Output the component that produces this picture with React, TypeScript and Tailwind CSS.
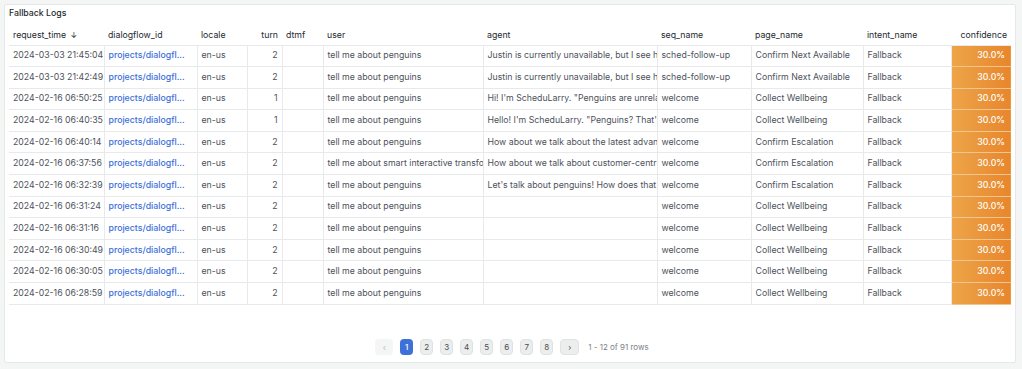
import React from 'react';

type Row = {
  time: string;
  turn: number;
  user: string;
  agent: string;
  seq: string;
  page: string;
};

const rows: Row[] = [
  { time: '2024-03-03 21:45:04', turn: 2, user: 'tell me about penguins', agent: 'Justin is currently unavailable, but I see he has availability soon', seq: 'sched-follow-up', page: 'Confirm Next Available' },
  { time: '2024-03-03 21:42:49', turn: 2, user: 'tell me about penguins', agent: 'Justin is currently unavailable, but I see he has availability soon', seq: 'sched-follow-up', page: 'Confirm Next Available' },
  { time: '2024-02-16 06:50:25', turn: 1, user: 'tell me about penguins', agent: 'Hi! I\'m ScheduLarry. "Penguins are unrelated to scheduling"', seq: 'welcome', page: 'Collect Wellbeing' },
  { time: '2024-02-16 06:40:35', turn: 1, user: 'tell me about penguins', agent: 'Hello! I\'m ScheduLarry. "Penguins? That\'s not something I do"', seq: 'welcome', page: 'Collect Wellbeing' },
  { time: '2024-02-16 06:40:14', turn: 2, user: 'tell me about penguins', agent: 'How about we talk about the latest advancements in scheduling', seq: 'welcome', page: 'Confirm Escalation' },
  { time: '2024-02-16 06:37:56', turn: 2, user: 'tell me about smart interactive transformation', agent: 'How about we talk about customer-centric scheduling', seq: 'welcome', page: 'Confirm Escalation' },
  { time: '2024-02-16 06:32:39', turn: 2, user: 'tell me about penguins', agent: 'Let\'s talk about penguins! How does that sound?', seq: 'welcome', page: 'Confirm Escalation' },
  { time: '2024-02-16 06:31:24', turn: 2, user: 'tell me about penguins', agent: '', seq: 'welcome', page: 'Collect Wellbeing' },
  { time: '2024-02-16 06:31:16', turn: 2, user: 'tell me about penguins', agent: '', seq: 'welcome', page: 'Collect Wellbeing' },
  { time: '2024-02-16 06:30:49', turn: 2, user: 'tell me about penguins', agent: '', seq: 'welcome', page: 'Collect Wellbeing' },
  { time: '2024-02-16 06:30:05', turn: 2, user: 'tell me about penguins', agent: '', seq: 'welcome', page: 'Collect Wellbeing' },
  { time: '2024-02-16 06:28:59', turn: 2, user: 'tell me about penguins', agent: '', seq: 'welcome', page: 'Collect Wellbeing' },
];

const cell = 'h-[21.6px] px-1 whitespace-nowrap overflow-hidden border-b border-r border-[#e8e9eb]';
const head = 'h-[19px] px-1 whitespace-nowrap text-left font-normal text-[#24292e] border-b border-[#e8e9eb]';

const Pager: React.FC = () => {
  const pages = [1, 2, 3, 4, 5, 6, 7, 8];
  return (
    <div className="flex items-center justify-center gap-[7px] pl-[4px] h-[16px] text-[8px]">
      <span className="w-[18px] h-[16px] rounded-sm bg-[#f4f5f5] flex items-center justify-center text-[#b5b8bd]">‹</span>
      {pages.map((p) => (
        <span
          key={p}
          className={
            p === 1
              ? 'w-[13px] h-[16px] rounded-sm bg-[#3d71d9] text-white flex items-center justify-center font-medium'
              : 'w-[13px] h-[16px] rounded-sm bg-[#eceded] border border-[#e0e1e3] text-[#4a4f56] flex items-center justify-center'
          }
        >
          {p}
        </span>
      ))}
      <span className="w-[19px] h-[16px] rounded-sm bg-[#eceded] border border-[#e0e1e3] flex items-center justify-center text-[#4a4f56]">›</span>
      <span className="ml-[2px] text-[#7a7f87]">1 - 12 of 91 rows</span>
    </div>
  );
};

export default function App() {
  return (
    <div className="w-[1022px] h-[369px] bg-[#f4f5f5] p-1 text-[8.75px] text-[#4d525a]" style={{ fontFamily: 'Inter, "Noto Sans", sans-serif' }}>
      <div className="h-[359px] w-[1012px] bg-white border border-[#e6e7e8] rounded-[2px] flex flex-col">
        <div className="px-1 pt-[2px] h-[20px] font-medium text-[#24292e]">Fallback Logs</div>
        <div className="px-1 pt-[1px]">
          <table className="table-fixed border-collapse w-[1002px]">
            <colgroup>
              <col className="w-[95px]" />
              <col className="w-[93px]" />
              <col className="w-[50px]" />
              <col className="w-[35px]" />
              <col className="w-[41px]" />
              <col className="w-[160px]" />
              <col className="w-[174px]" />
              <col className="w-[94px]" />
              <col className="w-[112px]" />
              <col className="w-[88px]" />
              <col className="w-[60px]" />
            </colgroup>
            <thead>
              <tr>
                <th className={head}>
                  request_time <span className="inline-block ml-[2px] text-[8px]">↓</span>
                </th>
                <th className={head}>dialogflow_id</th>
                <th className={head}>locale</th>
                <th className={head + ' !text-right'}>turn</th>
                <th className={head}>dtmf</th>
                <th className={head}>user</th>
                <th className={head}>agent</th>
                <th className={head}>seq_name</th>
                <th className={head}>page_name</th>
                <th className={head}>intent_name</th>
                <th className={head + ' !text-right'}>confidence</th>
              </tr>
            </thead>
            <tbody>
              {rows.map((r, i) => (
                <tr key={i}>
                  <td className={cell}>{r.time}</td>
                  <td className={cell + ' text-[#3b6fd9] font-medium'}>projects/dialogfl...</td>
                  <td className={cell}>en-us</td>
                  <td className={cell + ' text-right'}>{r.turn}</td>
                  <td className={cell}></td>
                  <td className={cell}>{r.user}</td>
                  <td className={cell + ' text-clip'}>{r.agent}</td>
                  <td className={cell}>{r.seq}</td>
                  <td className={cell}>{r.page}</td>
                  <td className={cell}>Fallback</td>
                  <td className="h-[21.6px] px-[6px] text-right text-white font-medium bg-gradient-to-r from-[#eda448] to-[#e8862c] border-b border-[#f3c58e]">
                    30.0%
                  </td>
                </tr>
              ))}
            </tbody>
          </table>
        </div>
        <div className="flex-1" />
        <div className="pb-[7px]">
          <Pager />
        </div>
      </div>
    </div>
  );
}
